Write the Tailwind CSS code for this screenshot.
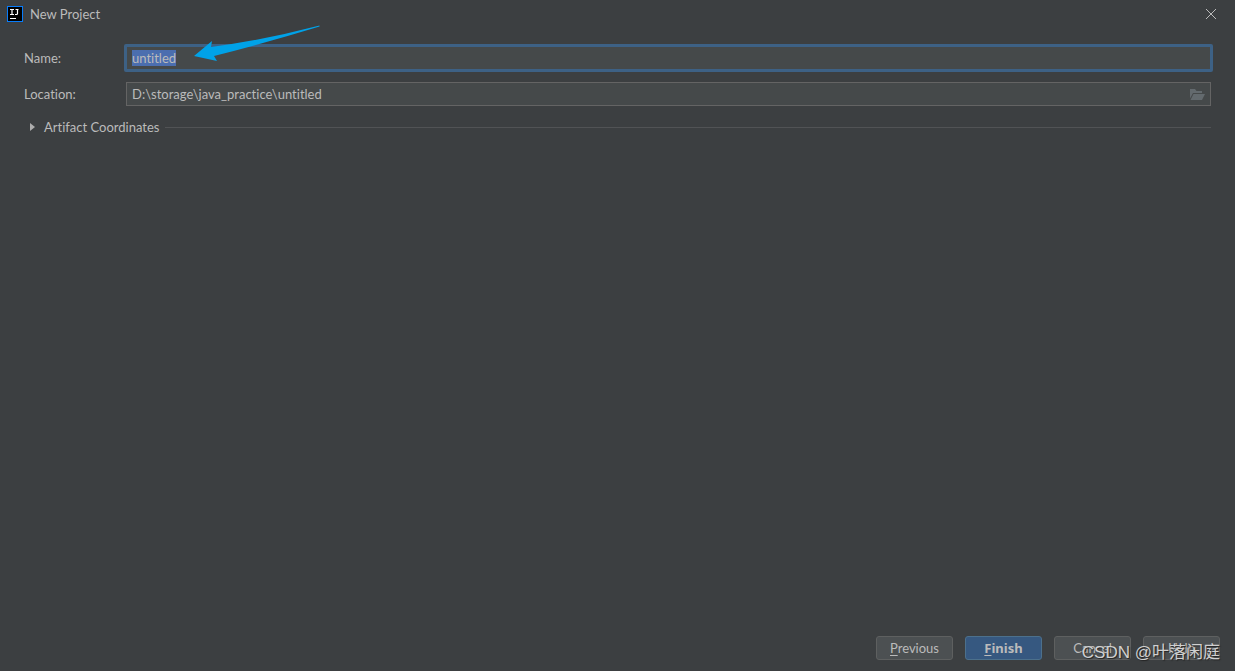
<!DOCTYPE html>
<html lang="en">
<head>
<meta charset="utf-8">
<title>New Project</title>
<script src="https://cdn.jsdelivr.net/npm/@tailwindcss/browser@4"></script>
</head>
<body class="relative flex min-h-screen flex-col bg-[#3c3f41] font-['Lato','Noto_Sans_CJK_SC',sans-serif] text-[13px] leading-[18px] text-[#bbbbbb] [font-variant-ligatures:none]">
  <header class="flex h-7 items-center pr-[18px] pl-[7px]">
    <svg class="size-4" viewBox="0 0 16 16" aria-hidden="true">
      <rect width="16" height="16" fill="#087cfa"/>
      <rect x="1" y="1" width="14" height="14" fill="#000"/>
      <path d="M3 3.500h4M5 3.500v5M3 8.500h4M8.500 3.500h3M10.500 3.500v4q0 1-1 1h-1.500" fill="none" stroke="#fff" stroke-width="1.200"/>
      <path d="M3 12.500h6" stroke="#fff" stroke-width="1"/>
    </svg>
    <h1 class="ml-[7px]">New Project</h1>
    <button type="button" aria-label="Close" class="ml-auto">
      <svg class="size-3" viewBox="0 0 12 12" fill="none" stroke="#bbbbbb" stroke-width="1" aria-hidden="true"><path d="M1 1l10 10M11 1L1 11"/></svg>
    </button>
  </header>

  <form class="flex grow flex-col pt-4 pr-6 pl-6">
    <div class="flex items-center">
      <label for="name" class="w-[100px]">Name:</label>
      <input id="name" type="text" value="untitled" autofocus class="-mr-0.5 h-7 min-w-0 grow rounded-xs border-[3px] border-[#3d6185] bg-[#45494a] px-[5px] caret-transparent outline-none selection:bg-[#4b6eaf] selection:text-[#bbbbbb]">
    </div>
    <div class="mt-[10px] flex items-center">
      <label for="location" class="w-[102px]">Location:</label>
      <div class="flex h-6 min-w-0 grow items-center border border-[#646464] bg-[#45494a] pr-[5px] pl-[5px]">
        <input id="location" type="text" value="D:\storage\java_practice\untitled" class="min-w-0 grow bg-transparent outline-none">
        <button type="button" aria-label="Browse" class="pt-0.5">
          <svg class="h-3 w-4" viewBox="0 0 16 12" fill="#636a6e" aria-hidden="true"><path d="M1 0h5l1.500 2H13v2H4L1 9.500z"/><path d="M4.500 5H16l-3 6H1.500z"/></svg>
        </button>
      </div>
    </div>
    <div class="mt-3 flex items-center">
      <button type="button" aria-expanded="false" class="flex items-center pl-1.5">
        <svg class="mr-[9px] h-2 w-[5px]" viewBox="0 0 5 8" fill="#adadad" aria-hidden="true"><path d="M0 0l5 4-5 4z"/></svg>
        Artifact Coordinates
      </button>
      <div class="ml-1.5 h-px grow bg-[#515355]"></div>
    </div>
  </form>

  <footer class="flex justify-end gap-3 pr-[15px] pb-[11px]">
    <button type="button" class="h-6 w-[77px] rounded-[3px] border border-[#5e6060] bg-[#4c5052]"><span class="underline underline-offset-2">P</span>revious</button>
    <button type="button" class="h-6 w-[77px] rounded-[3px] border border-[#4c708c] bg-[#365880] font-['Noto_Sans',sans-serif] font-bold"><span class="underline underline-offset-2">F</span>inish</button>
    <button type="button" class="h-6 w-[77px] rounded-[3px] border border-[#5e6060] bg-[#4c5052]">Cancel</button>
    <button type="button" class="h-6 w-[77px] rounded-[3px] border border-[#5e6060] bg-[#4c5052]">Help</button>
  </footer>

  <svg class="pointer-events-none absolute top-6 left-[194px] h-[38px] w-[127px]" viewBox="0 0 127 38" fill="#00a2e8" aria-hidden="true"><path d="M0 32l18-15-1 6Q70 16 125.500 1.500v1Q75 18 20 32l3 5z"/></svg>
  <p class="pointer-events-none absolute right-[15px] bottom-1.5 font-['Liberation_Sans','Noto_Sans_CJK_SC',sans-serif] text-[17px] leading-6 whitespace-nowrap text-[#d0d0d0] [text-shadow:1px_1px_1px_#222]">CSDN @叶落闲庭</p>

  <script>
    document.getElementById('name').focus();
    document.getElementById('name').select();
  </script>
</body>
</html>
